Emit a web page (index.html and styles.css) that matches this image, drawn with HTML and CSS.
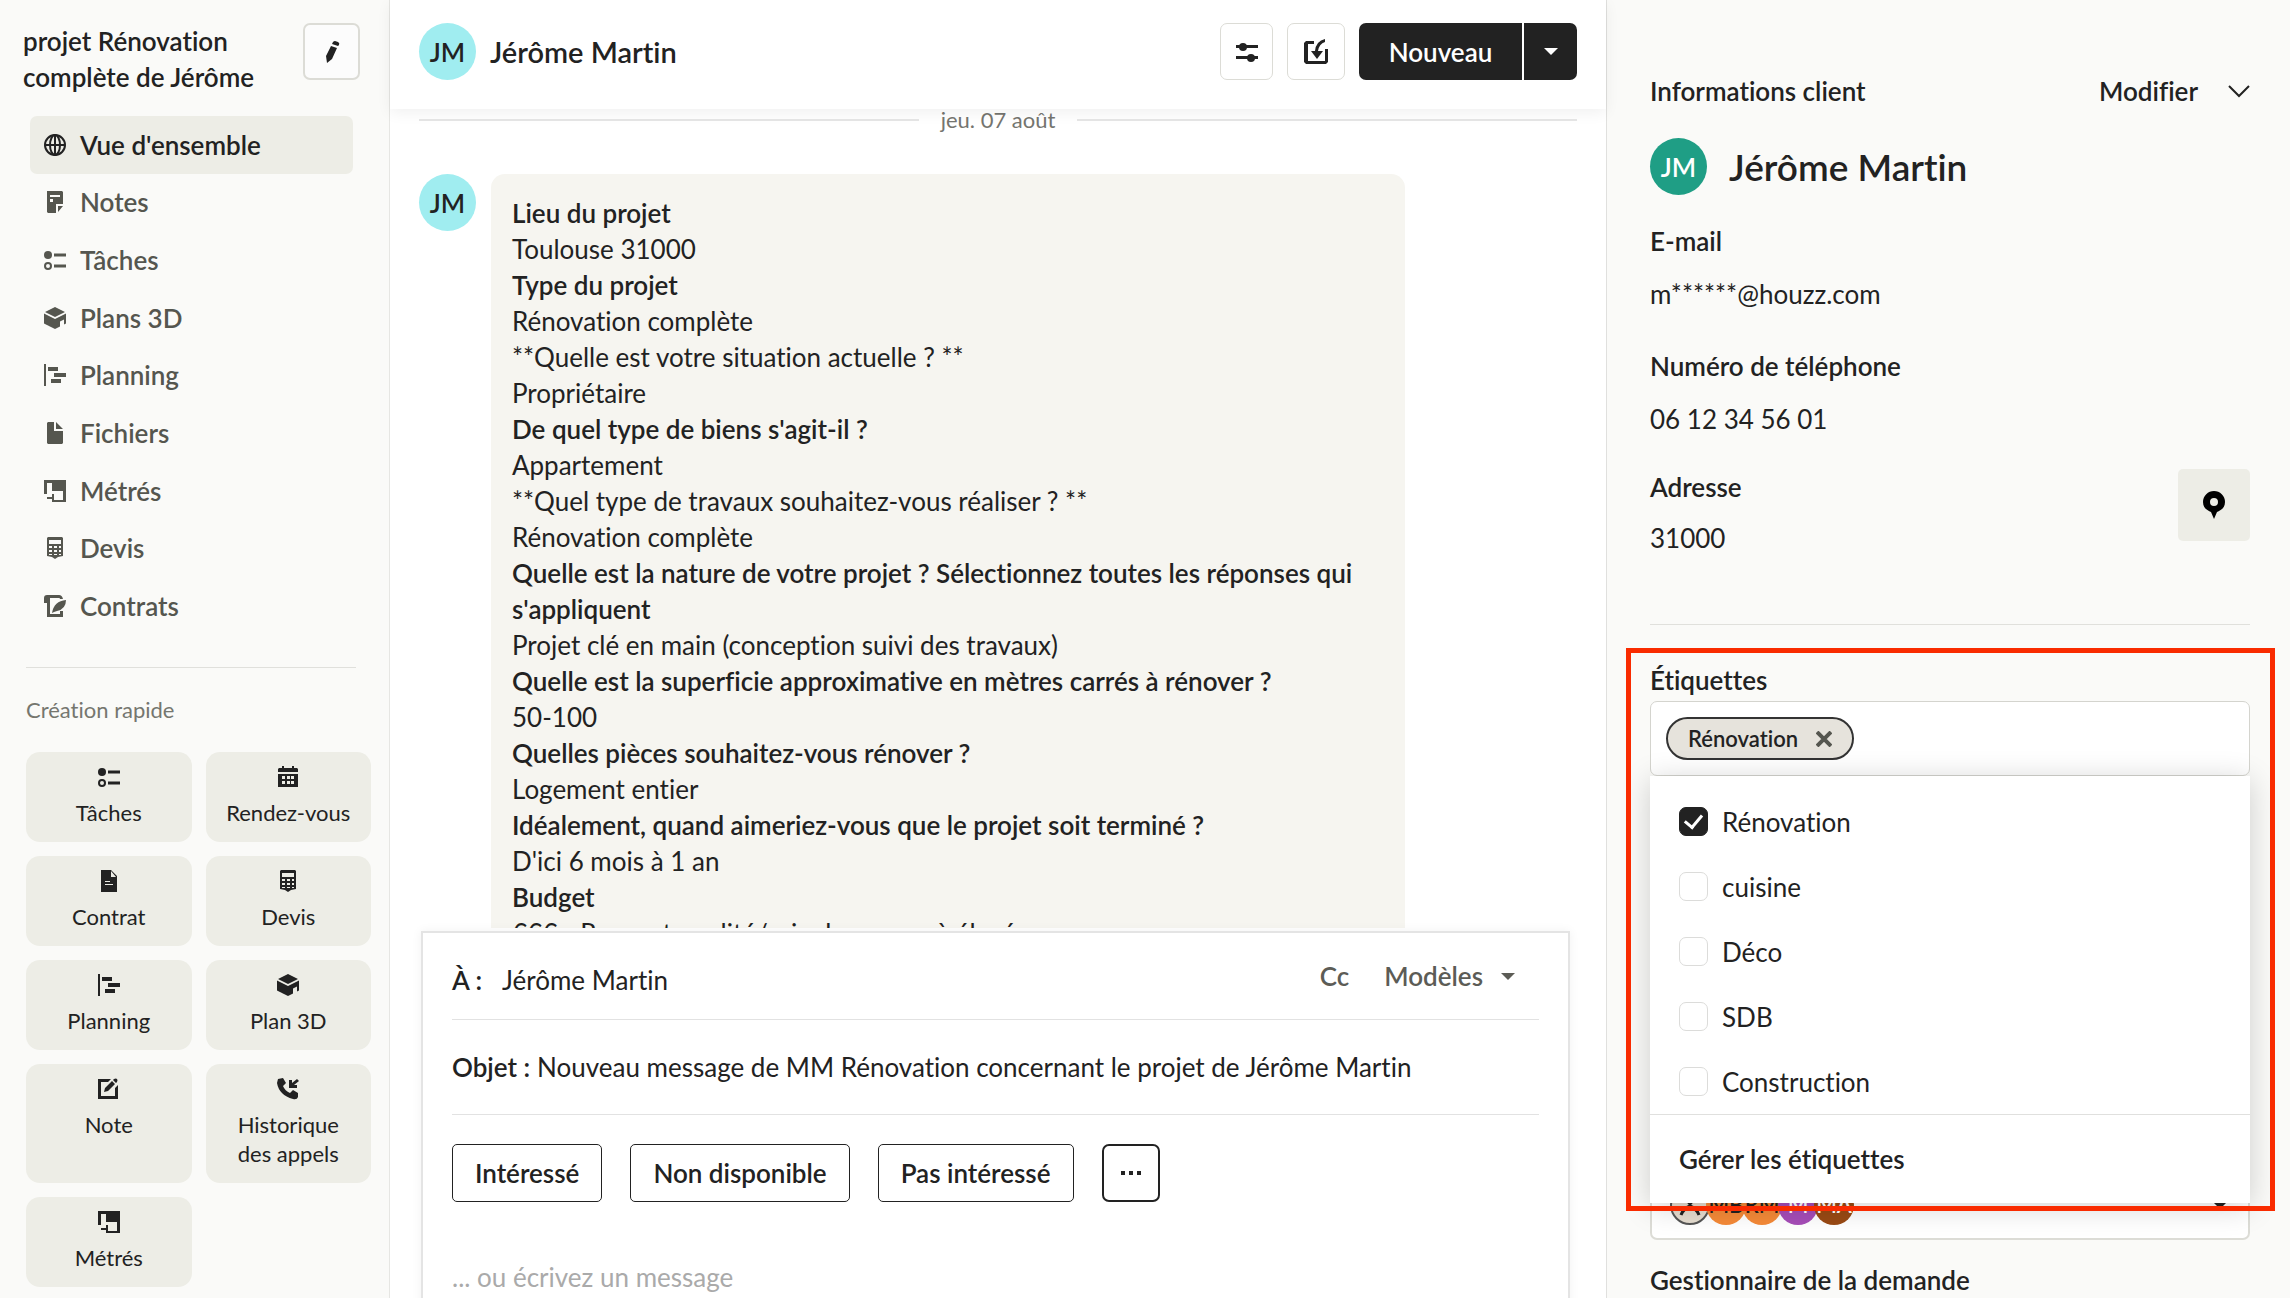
FILE: index.html
```html
<!DOCTYPE html>
<html lang="fr">
<head>
  <meta charset="UTF-8" />
  <meta name="viewport" content="width=device-width, initial-scale=1.0"/>
  <title>projet Rénovation complète de Jérôme</title>
  <link rel="stylesheet" href="styles.css">
</head>
<body>
  <!-- icons used more than once -->
  <svg class="sprite" aria-hidden="true">
    <symbol id="i-tasks" viewBox="0 0 22 22"><circle cx="4" cy="6" r="4"/><circle cx="4" cy="17" r="3" fill="none" stroke="currentColor" stroke-width="2"/><path d="M10 4.500h12v3h-12zM10 15.500h12v3h-12z"/></symbol>
    <symbol id="i-cube" viewBox="0 0 22 22"><path d="M11 0 21 5 11 10 1 5zM0 6.500l11 5.500 11-5.500v10l-2 1v-5l-4 2v5l-5 2.500-11-5.500z"/></symbol>
    <symbol id="i-plan" viewBox="0 0 22 22"><path d="M0 0h2v22H0zM4 3h10v4H4zM10 9h12v4H10zM7 15h10v4H7z"/></symbol>
    <symbol id="i-metre" viewBox="0 0 22 22"><path fill-rule="evenodd" d="M0 0h22v22H8v-3H3v-2h5v-3h2v6h9v-9H8V3H3v11H0z"/></symbol>
    <symbol id="i-calc" viewBox="0 0 22 22"><path fill-rule="evenodd" d="M4 0h14l1 1v18l-5 1-3 2-3-2-5-1V1zM5 3v4h12V3zM5 9v2h3V9zM10 9v2h3V9zM15 9v2h2V9zM5 13v2h3v-2zM10 13v2h3v-2zM15 13v2h2v-2zM5 17v1h3v-1zM10 17v1h3v-1zM15 17v1h2v-1z"/></symbol>
  </svg>

  <div class="app">
    <aside class="sidebar">
      <div class="project">
        <h1>projet Rénovation complète de Jérôme</h1>
        <button class="icon-btn edit" aria-label="Modifier le projet">
          <svg class="icon" viewBox="0 0 22 22"><path d="M12 1q1-1 2-1l3 1q2 1 1 3l-1 1-6-2zM10 5l6 2-5 11-5 4-1-7z"/></svg>
        </button>
      </div>
      <nav class="menu">
        <a href="#" class="active"><svg class="icon" viewBox="0 0 22 22" fill="none" stroke="currentColor" stroke-width="2"><circle cx="11" cy="11" r="10"/><ellipse cx="11" cy="11" rx="5" ry="10"/><path d="M1 11h20M11 1v20"/></svg>Vue d'ensemble</a>
        <a href="#"><svg class="icon" viewBox="0 0 22 22"><path fill-rule="evenodd" d="M3 0h15l1 1v12h-7v9H4l-1-1zM6 4v2h10V4zM6 8v3h3V8zM14 15h5l-5 6z"/></svg>Notes</a>
        <a href="#"><svg class="icon"><use href="#i-tasks"/></svg>Tâches</a>
        <a href="#"><svg class="icon"><use href="#i-cube"/></svg>Plans 3D</a>
        <a href="#"><svg class="icon"><use href="#i-plan"/></svg>Planning</a>
        <a href="#"><svg class="icon" viewBox="0 0 22 22"><path d="M4 0h6v9h9v12l-1 1H4l-1-1V1zM12 0l7 7h-7z"/></svg>Fichiers</a>
        <a href="#"><svg class="icon"><use href="#i-metre"/></svg>Métrés</a>
        <a href="#"><svg class="icon"><use href="#i-calc"/></svg>Devis</a>
        <a href="#"><svg class="icon" viewBox="0 0 22 22"><path d="M3 0h12q3 0 4 4h-3q0-1-1-1H6v16h10v-3h3v6H3V8H0V3q0-3 3-3z"/><path d="M22 5q0 9-9 11l-3 1-2 1q2-12 14-13z"/></svg>Contrats</a>
      </nav>
      <section class="quick">
        <h2>Création rapide</h2>
        <div class="tiles">
          <button><svg class="icon"><use href="#i-tasks"/></svg>Tâches</button>
          <button><svg class="icon" viewBox="0 0 22 22"><path fill-rule="evenodd" d="M2 2h3V0h2v2h8V0h2v2h3l1 1v3H1V3zM1 8h20v13H1zM5 10v3h3v-3zM10 10v3h3v-3zM14 10v3h3v-3zM5 15v3h3v-3zM10 15v3h3v-3zM14 15v3h3v-3z"/></svg>Rendez-vous</button>
          <button><svg class="icon" viewBox="0 0 22 22"><path fill-rule="evenodd" d="M3 0h10l6 6v16H3zM13 1v6h5zM7 11v1h5v-1zM7 14v1h8v-1z"/></svg>Contrat</button>
          <button><svg class="icon"><use href="#i-calc"/></svg>Devis</button>
          <button><svg class="icon"><use href="#i-plan"/></svg>Planning</button>
          <button><svg class="icon"><use href="#i-cube"/></svg>Plan 3D</button>
          <button><svg class="icon" viewBox="0 0 22 22"><path d="M0 1h13l-3 3H3v14h14v-8l3-3v14H0z"/><path d="M14 3l3 3-7 7-4 1 1-4zM16 1q2-1 3 0t0 3l-1 1-3-3z"/></svg>Note</button>
          <button><svg class="icon" viewBox="0 0 22 22"><path d="M1 1l5-1 3 5-3 3q2 5 7 7l3-3 5 3v4q-1 3-5 2Q2 17 0 5zM20 1l2 2-5 4h3v3h-8V2h3v3z"/></svg>Historique des appels</button>
          <button><svg class="icon"><use href="#i-metre"/></svg>Métrés</button>
        </div>
      </section>
    </aside>

    <main class="chat">
      <header class="chat-header">
        <span class="avatar cyan">JM</span>
        <h2>Jérôme Martin</h2>
        <button class="icon-btn narrow" aria-label="Filtres">
          <svg class="icon" viewBox="0 0 22 22"><path d="M0 4h22v3H0zM0 15h22v3H0z"/><circle cx="7" cy="6" r="4"/><circle cx="15" cy="17" r="4"/></svg>
        </button>
        <button class="icon-btn" aria-label="Importer">
          <svg class="icon large" viewBox="0 0 26 26"><path d="M3 2h8v3H5v17h17V10h3v13l-2 2H3l-2-2V4z"/><path d="M22 0v3q-6 2-7 9h5l-6 8-6-8h4q1-10 10-12z"/></svg>
        </button>
        <div class="split">
          <button class="new">Nouveau</button>
          <button class="more" aria-label="Plus de choix"><span class="caret"></span></button>
        </div>
      </header>

      <div class="messages">
        <div class="date">jeu. 07 août</div>
        <div class="message">
          <span class="avatar cyan">JM</span>
          <div class="bubble">
            <b>Lieu du projet</b><br>
            Toulouse 31000<br>
            <b>Type du projet</b><br>
            Rénovation complète<br>
            **Quelle est votre situation actuelle ? **<br>
            Propriétaire<br>
            <b>De quel type de biens s'agit-il ?</b><br>
            Appartement<br>
            **Quel type de travaux souhaitez-vous réaliser ? **<br>
            Rénovation complète<br>
            <b>Quelle est la nature de votre projet ? Sélectionnez toutes les réponses qui s'appliquent</b><br>
            Projet clé en main (conception suivi des travaux)<br>
            <b>Quelle est la superficie approximative en mètres carrés à rénover ?</b><br>
            50-100<br>
            <b>Quelles pièces souhaitez-vous rénover ?</b><br>
            Logement entier<br>
            <b>Idéalement, quand aimeriez-vous que le projet soit terminé ?</b><br>
            D'ici 6 mois à 1 an<br>
            <b>Budget</b><br>
            €€€ - Rapport qualité/prix du moyen à élevé
          </div>
        </div>
      </div>

      <form class="composer">
        <div class="field to">
          <label for="to">À :</label>
          <input id="to" type="text" value="Jérôme Martin">
          <button type="button" class="text-btn">Cc</button>
          <button type="button" class="text-btn">Modèles <span class="caret"></span></button>
        </div>
        <div class="field subject">
          <label for="subject">Objet :</label>
          <input id="subject" type="text" value="Nouveau message de MM Rénovation concernant le projet de Jérôme Martin">
        </div>
        <div class="replies">
          <button type="button">Intéressé</button>
          <button type="button">Non disponible</button>
          <button type="button">Pas intéressé</button>
          <button type="button" class="dots" aria-label="Plus de réponses"><svg class="icon" viewBox="0 0 22 22"><path d="M1 9h4v4H1zM9 9h4v4H9zM17 9h4v4h-4z"/></svg></button>
        </div>
        <textarea aria-label="Message" placeholder="... ou écrivez un message"></textarea>
      </form>
    </main>

    <aside class="client">
      <div class="client-head">
        <h2>Informations client</h2>
        <button class="text-btn dark">Modifier</button>
        <button class="text-btn dark" aria-label="Replier"><svg class="icon" viewBox="0 0 22 22" fill="none" stroke="currentColor" stroke-width="2"><path d="M1 6l10 10 10-10"/></svg></button>
      </div>
      <div class="client-name">
        <span class="avatar green">JM</span>
        <strong>Jérôme Martin</strong>
      </div>
      <dl>
        <dt>E-mail</dt>
        <dd>m******@houzz.com</dd>
        <dt>Numéro de téléphone</dt>
        <dd>06 12 34 56 01</dd>
      </dl>
      <div class="address">
        <dl>
          <dt>Adresse</dt>
          <dd>31000</dd>
        </dl>
        <button class="map-btn" aria-label="Voir sur la carte">
          <svg class="pin" viewBox="0 0 22 28"><path fill-rule="evenodd" d="M11 0a11 11 0 0 1 11 11c0 6-4 8-8 10l-3 7-3-7C4 19 0 17 0 11A11 11 0 0 1 11 0zM11 7a4 4 0 1 0 0 8 4 4 0 0 0 0-8z"/></svg>
        </button>
      </div>

      <section class="tags">
        <h3>Étiquettes</h3>
        <div class="tag-input">
          <span class="chip">Rénovation
            <button aria-label="Retirer Rénovation"><svg class="cross" viewBox="0 0 16 16" fill="none" stroke="currentColor" stroke-width="4"><path d="M1 1l14 14M15 1L1 15"/></svg></button>
          </span>
          <div class="dropdown">
            <label><input type="checkbox" checked>Rénovation</label>
            <label><input type="checkbox">cuisine</label>
            <label><input type="checkbox">Déco</label>
            <label><input type="checkbox">SDB</label>
            <label><input type="checkbox">Construction</label>
            <a href="#">Gérer les étiquettes</a>
          </div>
        </div>
        <div class="highlight"></div>
      </section>

      <button class="team" aria-label="Équipe">
        <span class="member beige"><svg class="icon" viewBox="0 0 22 22" fill="none" stroke="currentColor" stroke-width="3"><path d="M4 1l7 9 7-9M2 21q2-6 9-9 7 3 9 9"/></svg></span>
        <span class="member orange">MB</span>
        <span class="member orange">RM</span>
        <span class="member purple">M</span>
        <span class="member brown">MA</span>
        <span class="caret"></span>
      </button>
      <h3>Gestionnaire de la demande</h3>
    </aside>
  </div>
</body>
</html>
```
FILE: styles.css
```css
* {
  box-sizing: border-box;
}
body {
  margin: 0;
  font-family: Lato, "Open Sans", sans-serif;
  font-size: 26px;
  font-variant-ligatures: none;
  line-height: 36px;
  color: #222;
  background: #fff;
}
h1, h2, h3, dl, dd {
  margin: 0;
  font-size: 26px;
  font-weight: 600;
}
b {
  font-weight: 600;
}
button, input, textarea {
  font: inherit;
  color: inherit;
}
button {
  padding: 0;
  border: 0;
  background: none;
}
a {
  color: inherit;
  text-decoration: none;
}
.sprite {
  position: absolute;
  width: 0;
  height: 0;
}
.icon {
  display: block;
  width: 22px;
  height: 22px;
  fill: currentColor;
  flex: none;
}
.icon[fill="none"], .cross {
  fill: none;
}
.icon.large {
  width: 26px;
  height: 26px;
}
.caret {
  display: block;
  border: 7px solid transparent;
  border-top-color: currentColor;
  border-bottom: 0;
}
.avatar {
  display: flex;
  align-items: center;
  justify-content: center;
  flex: none;
  width: 57px;
  height: 57px;
  border-radius: 50%;
  font-weight: 600;
}
.cyan {
  background: #a0edf0;
}
.green {
  background: #1f9e85;
  color: #fff;
}
.app {
  display: grid;
  grid-template-columns: 390px 1fr 684px;
  height: 100vh;
  overflow: hidden;
}

/* sidebar */
.sidebar {
  background: #fafaf8;
  border-right: 1px solid #e6e6e3;
}
.project {
  display: flex;
  justify-content: space-between;
  align-items: flex-start;
  padding: 23px 29px 0 23px;
  height: 116px;
}
.project h1 {
  width: 260px;
}
.icon-btn {
  display: flex;
  align-items: center;
  justify-content: center;
  flex: none;
  width: 58px;
  height: 57px;
  border: 1px solid #dcdcd6;
  border-radius: 7px;
  background: #fff;
}
.icon-btn.narrow {
  width: 53px;
}
.icon-btn.edit {
  width: 57px;
  border-width: 2px;
  background: #fcfcfc;
}
.menu {
  display: grid;
  grid-auto-rows: 1fr;
  height: 519px;
  margin: 0 36px 0 30px;
}
.menu a {
  display: flex;
  align-items: center;
  gap: 14px;
  padding-left: 14px;
  border-radius: 7px;
  font-weight: 600;
  color: #55564f;
}
.menu .active {
  background: #edede6;
  color: #222;
}
.quick {
  margin: 32px 18px 0 26px;
}
.quick h2 {
  margin-right: 15px;
  padding-top: 24px;
  border-top: 1px solid #e0e0dc;
  font-size: 22px;
  font-weight: 400;
  color: #75766f;
}
.tiles {
  display: grid;
  grid-template-columns: 1fr 1fr;
  gap: 14px;
  margin-top: 24px;
}
.tiles button {
  display: flex;
  flex-direction: column;
  align-items: center;
  gap: 10px;
  padding: 14px 18px 15px;
  border-radius: 14px;
  background: #edede6;
  font-size: 22px;
  line-height: 29px;
}

/* conversation */
.chat {
  display: flex;
  flex-direction: column;
  min-width: 0;
}
.chat-header {
  display: flex;
  align-items: center;
  gap: 14px;
  height: 109px;
  padding: 0 29px 6px;
  background: #fff;
  box-shadow: 0 4px 14px rgba(0,0,0,0.06);
  z-index: 1;
}
.chat-header h2 {
  flex: 1;
  font-size: 29px;
}
.split {
  display: flex;
  gap: 2px;
}
.split button {
  height: 57px;
  background: #222;
  color: #fff;
  font-weight: 600;
}
.split .new {
  width: 163px;
  border-radius: 7px 0 0 7px;
}
.split .more {
  display: flex;
  align-items: center;
  justify-content: center;
  width: 53px;
  border-radius: 0 7px 7px 0;
}
.messages {
  flex: none;
  height: 819px;
  padding: 0 29px;
  overflow: hidden;
}
.date {
  display: flex;
  align-items: center;
  gap: 22px;
  height: 22px;
  font-size: 22px;
  line-height: 22px;
  color: #75756f;
}
.date::before, .date::after {
  content: "";
  flex: 1;
  height: 2px;
  background: #e6e6e6;
}
.message {
  display: flex;
  gap: 15px;
  margin-top: 43px;
}
.bubble {
  flex: 0 1 914px;
  padding: 21px;
  border-radius: 14px;
  background: #f6f5f0;
}
.composer {
  flex: 1;
  display: flex;
  flex-direction: column;
  min-height: 0;
  margin: 3px 36px 0 31px;
  padding: 0 29px;
  border: 2px solid #e4e4e4;
  border-bottom: 0;
  box-shadow: 0 0 10px rgba(0,0,0,0.06);
}
.composer input, .composer textarea {
  flex: 1;
  min-width: 0;
  padding: 0;
  border: 0;
  outline: 0;
  background: none;
}
.field {
  display: flex;
  align-items: center;
  border-bottom: 1px solid #e2e2e2;
}
.field label {
  font-weight: 600;
}
.to {
  gap: 20px;
  height: 87px;
  padding-top: 8px;
}
.subject {
  gap: 7px;
  height: 95px;
}
.text-btn {
  display: flex;
  align-items: center;
  gap: 18px;
  font-weight: 600;
  color: #5c5c56;
}
.to .text-btn {
  margin: 0 24px 8px -9px;
}
.text-btn.dark {
  color: #222;
}
.replies {
  display: flex;
  gap: 28px;
  margin: 29px 0 57px;
}
.replies button {
  height: 58px;
  padding: 0 22px;
  border: 1px solid #222;
  border-radius: 5px;
  font-weight: 600;
}
.replies .dots {
  padding: 0 16px;
  border-width: 2px;
  border-radius: 7px;
}
textarea {
  resize: none;
}
textarea::placeholder {
  color: #aaa;
}

/* client panel */
.client {
  padding: 73px 40px 0 43px;
  border-left: 1px solid #e0e0de;
  background: #fafaf8;
}
.client-head {
  display: flex;
  align-items: center;
  gap: 30px;
}
.client-head h2 {
  flex: 1;
}
.client-name {
  display: flex;
  align-items: center;
  gap: 22px;
  margin: 29px 0 28px;
}
.client-name strong {
  font-size: 37px;
  font-weight: 600;
}
dt {
  font-weight: 600;
}
dd {
  margin: 17px 0 36px;
  font-weight: 400;
}
dd:last-child {
  margin-bottom: 32px;
}
.address dd {
  margin-top: 15px;
}
.address {
  display: flex;
  justify-content: space-between;
  align-items: flex-start;
  height: 156px;
  border-bottom: 1px solid #e0e0dc;
}
.map-btn {
  display: flex;
  align-items: center;
  justify-content: center;
  width: 72px;
  height: 72px;
  border-radius: 5px;
  background: #edede6;
}
.pin {
  width: 22px;
  height: 28px;
}
.tags {
  position: relative;
  margin-top: 37px;
}
.tag-input {
  position: relative;
  display: flex;
  align-items: center;
  height: 75px;
  margin-top: 3px;
  padding: 0 15px;
  border: 1px solid #d4d4ce;
  border-radius: 7px;
  background: #fff;
}
.chip {
  display: flex;
  align-items: center;
  gap: 18px;
  height: 43px;
  padding: 0 20px;
  border: 2px solid #333;
  border-radius: 22px;
  background: #e6e3dc;
  font-size: 22px;
  font-weight: 600;
}
.cross {
  display: block;
  width: 16px;
  height: 16px;
  color: #55564f;
}
.dropdown {
  position: absolute;
  top: 74px;
  left: -1px;
  right: -1px;
  padding-top: 13px;
  background: #fff;
  box-shadow: 0 4px 28px rgba(0,0,0,0.18);
  z-index: 2;
}
.dropdown label {
  display: flex;
  align-items: center;
  gap: 14px;
  height: 65px;
  padding-left: 29px;
}
.dropdown input {
  appearance: none;
  display: flex;
  align-items: center;
  justify-content: center;
  width: 29px;
  height: 29px;
  margin: 0;
  border: 1px solid #dcdcda;
  border-radius: 7px;
  background: #fff;
}
.dropdown input:checked {
  background: #222;
  border-color: #222;
}
.dropdown input:checked::before {
  content: "";
  width: 8px;
  height: 14px;
  margin-bottom: 4px;
  border: solid #fff;
  border-width: 0 3px 3px 0;
  transform: rotate(40deg);
}
.dropdown a {
  display: block;
  padding: 26px 29px;
  border-top: 1px solid #e0e0de;
  font-weight: 600;
}
.highlight {
  position: absolute;
  top: -14px;
  left: -24px;
  right: -25px;
  height: 563px;
  border: 5px solid #f92b00;
  pointer-events: none;
  z-index: 3;
}
.team {
  display: flex;
  align-items: center;
  width: 100%;
  height: 70px;
  margin: 394px 0 22px;
  padding: 0 20px 0 18px;
  border: 2px solid #dcdcd6;
  border-radius: 7px;
  background: #fff;
}
.member {
  display: flex;
  align-items: center;
  justify-content: center;
  width: 40px;
  height: 40px;
  margin-right: -4px;
  border-radius: 50%;
  font-size: 22px;
  font-weight: 600;
}
.beige {
  border: 2px solid #555;
  background: #e6ddd0;
}
.orange {
  background: #f58a38;
}
.purple {
  background: #a64db8;
  color: #fff;
}
.brown {
  background: #9a4a14;
  color: #fff;
}
.team .caret {
  margin-left: auto;
  border-width: 8px 8px 0;
}
```
